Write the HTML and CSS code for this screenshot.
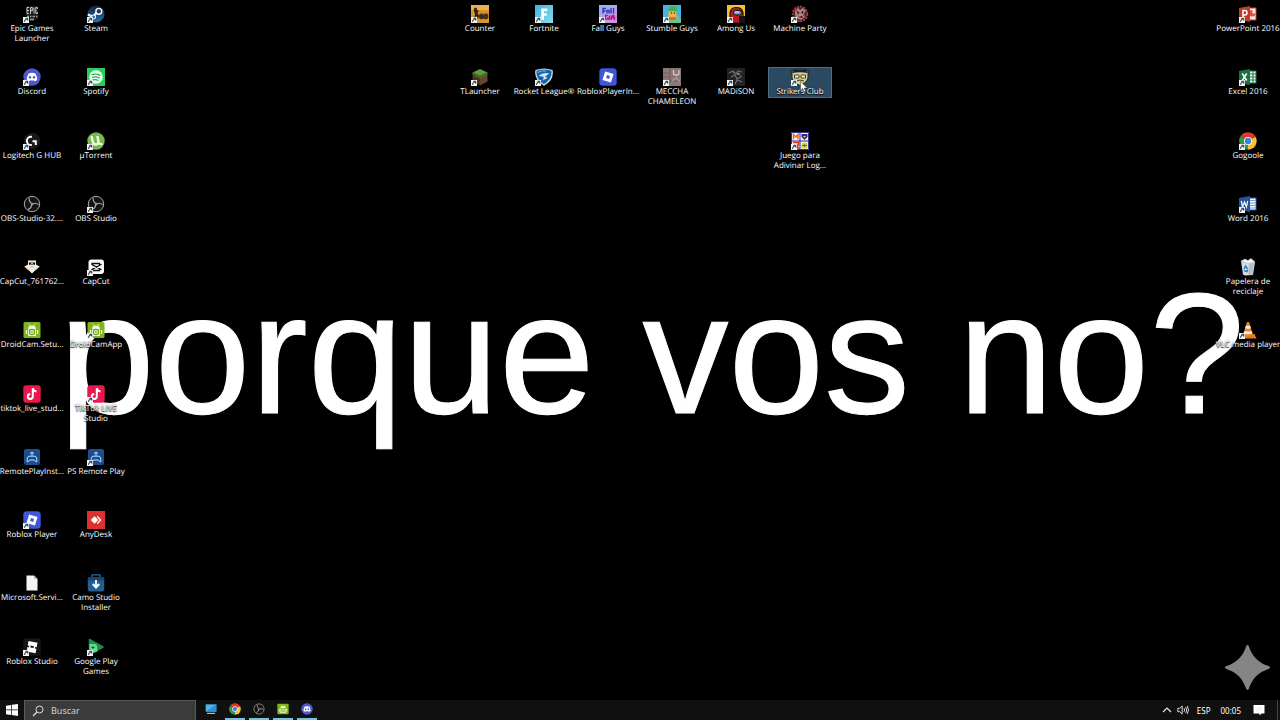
FILE: index.html
```html
<!DOCTYPE html>
<html lang="es">

<head>
  <meta charset="UTF-8">
  <meta name="viewport" content="width=device-width, initial-scale=1.0">
  <title>Escritorio</title>

  <link rel="stylesheet" href="styles.css">
</head>

<body>
  <!-- shared icons -->
  <svg class="sprite" aria-hidden="true">
    <symbol id="shortcut" viewBox="0 0 18 18">
      <rect y="12" width="6" height="6" fill="#f4f4f4" />
      <path d="M1.6 17v-1.2q0-1.3 1.5-1.5M2.6 13.2h2.2v2.2z" fill="#234" stroke="#234" stroke-width=".7" />
    </symbol>
    <symbol id="discord" viewBox="0 0 18 18">
      <circle cx="9" cy="9" r="8.7" fill="#5058d0" />
      <path d="M5.6 5.4Q9 4.3 12.4 5.4Q14.4 8.4 14.2 12Q13 13.1 11.4 13.3L10.8 12.2Q9 12.7 7.2 12.2L6.6 13.3Q5 13.1 3.8 12Q3.6 8.4 5.6 5.4z" fill="#fff" />
      <ellipse cx="7" cy="9.3" rx="1.2" ry="1.4" fill="#5058d0" />
      <ellipse cx="11" cy="9.3" rx="1.2" ry="1.4" fill="#5058d0" />
    </symbol>
    <symbol id="obs" viewBox="0 0 18 18">
      <circle cx="9" cy="9" r="7.7" fill="#141414" stroke="#aaa" stroke-width="1" />
      <g fill="none" stroke="#a8a8a8" stroke-width="1.1">
        <path d="M6.3 2.9Q5.5 7.5 10 8.7" />
        <path d="M6.3 2.9Q5.5 7.5 10 8.7" transform="rotate(120 9 9)" />
        <path d="M6.3 2.9Q5.5 7.5 10 8.7" transform="rotate(240 9 9)" />
      </g>
    </symbol>
    <symbol id="droidcam" viewBox="0 0 18 18">
      <rect x=".5" y="1" width="17" height="16" rx="1.5" fill="#7db51c" />
      <path d="M6 3l1.2 2M12 3l-1.2 2" stroke="#f2f8dc" stroke-width=".8" />
      <path d="M5 8Q5 4.4 9 4.4T13 8z" fill="#f2f8dc" />
      <rect x="5" y="8.6" width="8" height="6.4" rx=".8" fill="#f2f8dc" />
      <path d="M3.5 9v4M14.5 9v4" stroke="#f2f8dc" stroke-width="1.3" />
      <circle cx="9" cy="11" r="2.6" fill="#f2f8dc" stroke="#6fa51a" stroke-width="1.2" />
      <circle cx="9" cy="11" r=".9" fill="#6fa51a" />
    </symbol>
    <symbol id="tiktok" viewBox="0 0 18 18">
      <rect x=".3" y=".3" width="17.4" height="17.4" rx="3" fill="#e91950" />
      <path d="M9.8 3.2V11.4A2.5 2.5 0 1 1 7.2 8.9M9.8 3.2Q10.2 6.2 13.4 6.5" fill="none" stroke="#fff" stroke-width="2" />
    </symbol>
    <symbol id="psremote" viewBox="0 0 18 18">
      <rect x="1" y="1" width="16" height="16" rx="2" fill="#1c4f90" />
      <path d="M6 8.2h6q1.2 0 1.6 2l.4 3.3q-1.4 1-2.6-1.5H6.6Q5.4 14.5 4 13.5l.4-3.3q.4-2 1.6-2zM9 8V4.2M7 5.4q2-2.2 4 0" fill="none" stroke="#bcdcff" stroke-width="1" />
    </symbol>
    <symbol id="roblox" viewBox="0 0 18 18">
      <rect x=".3" y=".3" width="17.4" height="17.4" rx="3.5" fill="#3f55da" />
      <path fill-rule="evenodd" d="M6.2 3.4l8.4 2.7-2.7 8.5-8.5-2.7zM8 7l-.9 3.1 3 .9.9-3z" fill="#fff" />
    </symbol>
    <symbol id="chrome" viewBox="0 0 18 18">
      <path d="M9 9L1.4 4.6A8.7 8.7 0 0 1 16.6 4.8z" fill="#e0392b" />
      <path d="M9 9L16.6 4.8A8.7 8.7 0 0 1 9 17.7z" fill="#f7c52b" />
      <path d="M9 9V17.7A8.7 8.7 0 0 1 1.4 4.6z" fill="#2c9c4b" />
      <circle cx="9" cy="9" r="4.1" fill="#fff" />
      <circle cx="9" cy="9" r="3.2" fill="#3f7fe0" />
    </symbol>
  </svg>

  <main class="desktop">
    <h1 class="wallpaper">porque vos no?</h1>

    <nav class="icons left">
      <a class="item" href="#">
        <svg viewBox="0 0 18 18">
          <path d="M3 1h12v13l-6 2-6-2z" fill="#1c1c1c" />
          <path d="M6 2.5H4v6h2M4 5.5h2M7.5 9V2.5h1.8v3.2H7.5M11 2.5v6M14.4 4V2.5h-1.6v6h1.6V7" fill="none" stroke="#c8c8c8" stroke-width="1" />
          <path d="M4 11.5h2M7 11.5h1.5M9.5 11.5H12M13 11.5h1.5M7 14.5h4" stroke="#999" stroke-width="1.5" />
          <use href="#shortcut" />
        </svg>
        <span>Epic Games<br>Launcher</span>
      </a>
      <a class="item" href="#">
        <svg viewBox="0 0 18 18">
          <linearGradient id="steam" x2="0" y2="1">
            <stop stop-color="#14213d" />
            <stop offset="1" stop-color="#2472a4" />
          </linearGradient>
          <circle cx="9" cy="9" r="8.5" fill="url(#steam)" />
          <path d="M.8 9.5l5.5 2.3L10 7" stroke="#e8eef4" stroke-width="2.4" fill="none" />
          <circle cx="11.8" cy="6.3" r="2.9" fill="#203a5c" stroke="#fff" stroke-width="1.4" />
          <circle cx="6.6" cy="12" r="2" fill="#3c6d98" stroke="#fff" />
          <use href="#shortcut" />
        </svg>
        <span>Steam</span>
      </a>
      <a class="item" href="#">
        <svg viewBox="0 0 18 18"><use href="#discord" /><use href="#shortcut" /></svg>
        <span>Discord</span>
      </a>
      <a class="item" href="#">
        <svg viewBox="0 0 18 18">
          <rect width="18" height="18" fill="#25cf5b" />
          <circle cx="9" cy="9" r="6.8" fill="#f2fff5" />
          <path d="M4.5 6.8q5-1.5 9 .8M5 9.4q4.2-1.2 7.6.7M5.5 11.9q3.3-.9 6 .6" fill="none" stroke="#25b954" stroke-width="1.3" />
          <use href="#shortcut" />
        </svg>
        <span>Spotify</span>
      </a>
      <a class="item" href="#">
        <svg viewBox="0 0 18 18">
          <circle cx="9" cy="9" r="8.3" fill="#1a1a1a" />
          <path d="M9 4.8H8A4.1 4.1 0 0 0 8 13h.8M9.5 9.3h3.3V13" fill="none" stroke="#fff" stroke-width="2" />
          <use href="#shortcut" />
        </svg>
        <span>Logitech G HUB</span>
      </a>
      <a class="item" href="#">
        <svg viewBox="0 0 18 18">
          <circle cx="9" cy="9" r="8.7" fill="#79b84a" />
          <path d="M4.5 4l1.2 5.5q.9 3.6 4 2.9 2.300-.6 1.600-3.900L10.300 4M11.200 9.500q.8 3.300 4.300 2.300" fill="none" stroke="#f4ffe9" stroke-width="2.300" />
          <use href="#shortcut" />
        </svg>
        <span>µTorrent</span>
      </a>
      <a class="item" href="#">
        <svg viewBox="0 0 18 18"><use href="#obs" /></svg>
        <span>OBS-Studio-32....</span>
      </a>
      <a class="item" href="#">
        <svg viewBox="0 0 18 18"><use href="#obs" /><use href="#shortcut" /></svg>
        <span>OBS Studio</span>
      </a>
      <a class="item" href="#">
        <svg viewBox="0 0 18 18">
          <path d="M5 2.500h8v4l3.500 2-4 3.500L9 15.500 5.500 12l-4-3.500L5 6.500z" fill="#f3eee6" />
          <path d="M1.500 8.500l4 3.500M16.500 8.500l-4 3.500" stroke="#d79b78" />
          <path d="M6 4.300h6v2.500H6z" fill="#111" />
          <path d="M7.500 4.500l3 2M10.500 4.500l-3 2" stroke="#fff" stroke-width=".7" />
          <path d="M7 9h4" stroke="#bbb" />
        </svg>
        <span>CapCut_761762...</span>
      </a>
      <a class="item" href="#">
        <svg viewBox="0 0 18 18">
          <rect x="1.500" y="1.500" width="15.500" height="14.500" rx="3" fill="#fafafa" />
          <path d="M14.500 6.300L5 11.500v1h7.500v-1.300M14.500 11.700L5 6.500v-1h7.500v1.300" fill="none" stroke="#111" stroke-width="1.300" />
          <use href="#shortcut" />
        </svg>
        <span>CapCut</span>
      </a>
      <a class="item" href="#">
        <svg viewBox="0 0 18 18"><use href="#droidcam" /></svg>
        <span>DroidCam.Setu...</span>
      </a>
      <a class="item" href="#">
        <svg viewBox="0 0 18 18"><use href="#droidcam" /><use href="#shortcut" /></svg>
        <span>DroidCamApp</span>
      </a>
      <a class="item" href="#">
        <svg viewBox="0 0 18 18"><use href="#tiktok" /></svg>
        <span>tiktok_live_stud...</span>
      </a>
      <a class="item" href="#">
        <svg viewBox="0 0 18 18"><use href="#tiktok" /><use href="#shortcut" /></svg>
        <span>TikTok LIVE<br>Studio</span>
      </a>
      <a class="item" href="#">
        <svg viewBox="0 0 18 18"><use href="#psremote" /></svg>
        <span>RemotePlayInst...</span>
      </a>
      <a class="item" href="#">
        <svg viewBox="0 0 18 18"><use href="#psremote" /><use href="#shortcut" /></svg>
        <span>PS Remote Play</span>
      </a>
      <a class="item" href="#">
        <svg viewBox="0 0 18 18"><use href="#roblox" /><use href="#shortcut" /></svg>
        <span>Roblox Player</span>
      </a>
      <a class="item" href="#">
        <svg viewBox="0 0 18 18">
          <rect width="18" height="18" fill="#df3030" />
          <path d="M7.500 5.200L11.300 9l-3.800 3.800L3.700 9z" fill="#fff" />
          <path d="M10.200 5.500L13.700 9l-3.500 3.500" fill="none" stroke="#fff" stroke-width="1.300" />
        </svg>
        <span>AnyDesk</span>
      </a>
      <a class="item" href="#">
        <svg viewBox="0 0 18 18">
          <path d="M3.500 1.500H11l3.500 3.500v11.500h-11z" fill="#f5f5f5" />
          <path d="M11 1.500V5h3.500z" fill="#bbb" />
        </svg>
        <span>Microsoft.Servi...</span>
      </a>
      <a class="item" href="#">
        <svg viewBox="0 0 18 18">
          <path d="M5 4V.8h8V4" fill="none" stroke="#276a9e" stroke-width="1.300" />
          <rect x=".8" y="3" width="16.400" height="14.500" rx="2" fill="#235f93" />
          <path d="M.8 4.500q0-1.500 2-1.500h12.400q2 0 2 1.500v2H.8z" fill="#17456f" />
          <path d="M9 6v7M5.800 10L9 13.500l3.200-3.500" fill="none" stroke="#fff" stroke-width="1.900" />
        </svg>
        <span>Camo Studio<br>Installer</span>
      </a>
      <a class="item" href="#">
        <svg viewBox="0 0 18 18">
          <rect x=".3" y=".3" width="17.400" height="17.400" rx="3" fill="#161616" />
          <path fill-rule="evenodd" d="M5.500 3l9 1.700-.8 4.500-1.500-.3-.4 1.600 1.600.3-.8 4.400-9-1.700.9-4.500 1.500.3.300-1.600-1.600-.3zM7.700 7.600l-.4 1.800 3.200.6.400-1.800z" fill="#fff" />
          <use href="#shortcut" />
        </svg>
        <span>Roblox Studio</span>
      </a>
      <a class="item" href="#">
        <svg viewBox="0 0 18 18">
          <path d="M2.500 1.500L16 9 2.500 16.500z" fill="#26894d" stroke="#26894d" stroke-width="1.500" stroke-linejoin="round" />
          <path d="M2.500 6h5q2.800 0 2.800 4v3.500L2.500 16z" fill="#5be08e" />
          <path d="M4.500 9.500h3M6 8v3" stroke="#145c32" />
          <use href="#shortcut" />
        </svg>
        <span>Google Play<br>Games</span>
      </a>
    </nav>

    <nav class="icons games">
      <a class="item" href="#">
        <svg viewBox="0 0 18 18">
          <rect width="18" height="18" fill="#dc942f" />
          <rect width="18" height="5" fill="#e9b04e" />
          <path d="M2.500 4.500L8 5.500 6.500 8l1.500 3-1 3-1.500-3-2.500 3 1-5z" fill="#2c2417" />
          <circle cx="4.500" cy="4" r="1.500" fill="#2c2417" />
          <text class="glyph" x="8" y="13" font-size="6" fill="#3b2b14">GO</text>
          <use href="#shortcut" />
        </svg>
        <span>Counter</span>
      </a>
      <a class="item" href="#">
        <svg viewBox="0 0 18 18">
          <linearGradient id="fort" x2="1" y2="1">
            <stop stop-color="#3cb2e4" />
            <stop offset="1" stop-color="#8ddcec" />
          </linearGradient>
          <rect width="18" height="18" fill="url(#fort)" />
          <path d="M6.300 3.500h6v2.700H9v2h2.700v2.500H9v4H6.300z" fill="#fff" />
          <use href="#shortcut" />
        </svg>
        <span>Fortnite</span>
      </a>
      <a class="item" href="#">
        <svg viewBox="0 0 18 18">
          <linearGradient id="fall" x2="1" y2="1">
            <stop stop-color="#8fb9f0" />
            <stop offset="1" stop-color="#d68be8" />
          </linearGradient>
          <rect width="18" height="18" fill="url(#fall)" />
          <path d="M4 8.500V3.500h3M4 6h2.500M8 8.500V5.500h2v3M12 3v5.500M14.500 3v5.500" fill="none" stroke="#2b3bb4" stroke-width="1.400" />
          <path d="M9 10.500H6.500V14H9v-1.500M10.500 10.500V14h2v-3.500M15.500 10.500H14v1.700h1.500V14H14" fill="none" stroke="#c0187e" stroke-width="1.500" />
          <use href="#shortcut" />
        </svg>
        <span>Fall Guys</span>
      </a>
      <a class="item" href="#">
        <svg viewBox="0 0 18 18">
          <rect width="18" height="18" fill="#43b5e0" />
          <path d="M0 18l5-7h9l4 3v4z" fill="#66c48d" />
          <rect x="5.500" y="4" width="8" height="11" rx="3" fill="#f0b64d" />
          <path d="M5 6q0-4.500 5-4.500 4 0 4 3.500l2 1.300H5z" fill="#4fae42" />
          <circle cx="8.500" cy="8" r=".7" fill="#222" />
          <circle cx="11.500" cy="8" r=".7" fill="#222" />
          <path d="M6 12h7v3H6z" fill="#d96938" />
          <use href="#shortcut" />
        </svg>
        <span>Stumble Guys</span>
      </a>
      <a class="item" href="#">
        <svg viewBox="0 0 18 18">
          <rect width="18" height="18" fill="#f0c72b" />
          <path d="M3 18V9q0-6.500 6-6.500t7 5V18z" fill="#c21722" stroke="#19121a" stroke-width="1.200" />
          <path d="M12 11h6v7h-6z" fill="#19121a" />
          <rect x="6.500" y="5.500" width="8" height="4.500" rx="2.200" fill="#7d9aa6" stroke="#19121a" />
          <path d="M8 7h4" stroke="#e2f4f8" />
          <use href="#shortcut" />
        </svg>
        <span>Among Us</span>
      </a>
      <a class="item" href="#">
        <svg viewBox="0 0 18 18">
          <circle cx="9" cy="9" r="7.500" fill="#5b2027" stroke="#8f4a50" stroke-width="1.500" stroke-dasharray="2 1.200" />
          <path d="M4 5l3-2 2 2 3-2 3 3-2 2 1 4-4 3-5-2-1-4z" fill="#a98789" />
          <path d="M5.500 6l3 1.500L7 9.500zM12.500 5.500L10 7.500l2 1.500zM7 12l4-1 1 2z" fill="#320c12" />
          <path d="M3 3l3 3M15 12l-3-2M9 14v3" stroke="#ce1737" stroke-width="1.200" />
          <use href="#shortcut" />
        </svg>
        <span>Machine Party</span>
      </a>
      <a class="item" href="#">
        <svg viewBox="0 0 18 18">
          <path d="M9 1l7.500 3.500L9 8 1.500 4.500z" fill="#5f9c3a" />
          <path d="M1.500 4.500L9 8v9.500l-7.500-4z" fill="#493124" />
          <path d="M16.500 4.500L9 8v9.500l7.500-4z" fill="#69452f" />
          <path d="M1.500 4.500L9 8l7.500-3.500v2L14 7.500v1.200L12 8.500 9 10.500 6 8.800 4 9V7.500l-2.500-1z" fill="#3f7128" />
          <use href="#shortcut" />
        </svg>
        <span>TLauncher</span>
      </a>
      <a class="item" href="#">
        <svg viewBox="0 0 18 18">
          <path d="M1 2.500Q9-.5 17 2.500q1.500 9-8 14.500Q-.5 11 1 2.500z" fill="#1865a6" stroke="#dcecf8" stroke-width="1.200" />
          <path d="M3.500 8q4-4 11-2.500L10 8.500l2.500 1.500L7.500 12.500q2-2.500.5-4z" fill="#cfe6fa" />
          <path d="M2.500 4.500Q7 2 11 3" fill="none" stroke="#70b7ed" />
          <use href="#shortcut" />
        </svg>
        <span>Rocket League®</span>
      </a>
      <a class="item" href="#">
        <svg viewBox="0 0 18 18"><use href="#roblox" /></svg>
        <span>RobloxPlayerIn...</span>
      </a>
      <a class="item" href="#">
        <svg viewBox="0 0 18 18">
          <rect width="18" height="18" fill="#8b7775" />
          <path d="M0 5h7V0M7 5v8h11M0 9h7" fill="none" stroke="#6f5c5c" />
          <path d="M10.500 2v4q3 2.500 5.500 0V2" fill="none" stroke="#d8c9c4" stroke-width="1.200" />
          <path d="M9 13l4-3 4 4" fill="none" stroke="#a99491" stroke-width="1.500" />
          <use href="#shortcut" />
        </svg>
        <span>MECCHA<br>CHAMELEON</span>
      </a>
      <a class="item" href="#">
        <svg viewBox="0 0 18 18">
          <rect width="18" height="18" fill="#202224" />
          <path d="M2 5l4-2 3 3 2-3 4 1M4 9l4-2 2 4 5-3M8 16l2-4 5 2" fill="none" stroke="#6b7073" stroke-width="1.200" />
          <path d="M10 6l2-1 1 2zM6 4l1 2" fill="#a2a7aa" stroke="#888" stroke-width=".6" />
          <use href="#shortcut" />
        </svg>
        <span>MADiSON</span>
      </a>
      <a class="item selected" href="#">
        <svg viewBox="0 0 18 18">
          <path d="M1 2q4 0 8-1.500Q13 2 17 2v8q-1.500 5-8 7.500Q2.500 15 1 10z" fill="#ddd080" stroke="#161c2c" stroke-width="1" />
          <path d="M1.500 2.500Q9 0 16.500 2.500V5Q9 3.500 1.500 5z" fill="#18233a" />
          <path d="M3.500 7h4.500v3H3.500zM10 7h4.500v3H10z" fill="#f1efd9" stroke="#27313a" stroke-width=".9" />
          <path d="M5 13q4-2 8 0" stroke="#34352a" fill="none" />
          <use href="#shortcut" />
        </svg>
        <span>Strikers Club</span>
        <svg class="cursor" viewBox="0 0 8 12" aria-hidden="true">
          <path d="M.5.500v9l2.200-2 1.300 3.500 1.700-.7L4.300 7h3z" fill="#fff" stroke="#111" stroke-width=".4" />
        </svg>
      </a>
      <a class="item last-col" href="#">
        <svg viewBox="0 0 18 18">
          <rect width="18" height="18" fill="#f7f7fa" />
          <path d="M9 0v18M0 9h18" stroke="#26269e" stroke-width="1" />
          <path d="M.5.500h17v17H.500z" fill="none" stroke="#34349c" />
          <path d="M2.500 7.500V2.500L4.800 5 7 2.500v5" stroke="#d8702a" stroke-width="1.500" fill="none" />
          <path d="M10.500 2h6v3l-3 3-3-3z" fill="#3b1f7d" />
          <path d="M12 4h3l-1.500 2z" fill="#f2cf38" />
          <path d="M2 10.500h5.500V13H5l2.500 3H5" fill="none" stroke="#dd3024" stroke-width="1.600" />
          <rect x="10.500" y="10.500" width="6" height="6" rx="1" fill="#e3d733" />
          <path d="M11 13.500h5M13.500 12v3" stroke="#627322" />
          <use href="#shortcut" />
        </svg>
        <span>Juego para<br>Adivinar Log...</span>
      </a>
    </nav>

    <nav class="icons right">
      <a class="item" href="#">
        <svg viewBox="0 0 18 18">
          <rect x="8" y="3" width="9" height="12" fill="#fbeae5" stroke="#c43e2b" />
          <path d="M13.500 5v3.500h3A3.300 3.300 0 1 1 13.500 5z" fill="#d25a45" />
          <path d="M0 3l11-2v16L0 15z" fill="#c13a2a" />
          <path d="M4 13V5.500h2q2 0 2 2.200T6 10H4" fill="none" stroke="#fff" stroke-width="1.500" />
          <use href="#shortcut" />
        </svg>
        <span>PowerPoint 2016</span>
      </a>
      <a class="item" href="#">
        <svg viewBox="0 0 18 18">
          <rect x="8" y="3" width="9" height="12" fill="#effaf2" stroke="#227447" />
          <path d="M11 6h6M11 9h6M11 12h6M14 3v12" stroke="#227447" />
          <path d="M0 3l11-2v16L0 15z" fill="#1d7044" />
          <path d="M3.300 5.500l4.400 7M7.700 5.500l-4.400 7" stroke="#fff" stroke-width="1.500" />
          <use href="#shortcut" />
        </svg>
        <span>Excel 2016</span>
      </a>
      <a class="item" href="#">
        <svg viewBox="0 0 18 18"><use href="#chrome" /><use href="#shortcut" /></svg>
        <span>Gogoole</span>
      </a>
      <a class="item" href="#">
        <svg viewBox="0 0 18 18">
          <rect x="8" y="3" width="9" height="12" fill="#f1f6ff" stroke="#2a5aa0" />
          <path d="M11 5.500h5M11 8h5M11 10.500h5M11 13h5" stroke="#7b9dcb" />
          <path d="M0 3l11-2v16L0 15z" fill="#23539b" />
          <path d="M2.300 6l1.300 6L5.500 7l1.900 5 1.300-6" fill="none" stroke="#fff" stroke-width="1.200" />
          <use href="#shortcut" />
        </svg>
        <span>Word 2016</span>
      </a>
      <a class="item" href="#">
        <svg viewBox="0 0 18 18">
          <path d="M2 3l14 1-2 13-8 .5-2-1z" fill="#d7dde1" />
          <path d="M2 3l4-2 3 1.500L12 .5l4 3.500-7 1.500z" fill="#f6f8f9" stroke="#a8b2b9" stroke-width=".6" />
          <path d="M10 6l5-1-1.500 11.500-4 .8z" fill="#b4bec5" />
          <path d="M5 11l1.500-3L8.500 11M5 12.500l3 1.200 1-2" fill="none" stroke="#2878bd" stroke-width="1.400" />
        </svg>
        <span>Papelera de<br>reciclaje</span>
      </a>
      <a class="item" href="#">
        <svg viewBox="0 0 18 18">
          <path d="M2.500 13h13l2 4.500h-17z" fill="#e37a1b" />
          <path d="M8 1h2l4 13q-5 2-10 0z" fill="#ee8620" />
          <path d="M7 4.500q2 .8 4 0l.8 2.700q-2.800 1-5.600 0zM5.300 10q3.700 1.200 7.400 0l.8 2.500q-4.500 1.500-9 0z" fill="#f4f1ed" />
          <use href="#shortcut" />
        </svg>
        <span>VLC media player</span>
      </a>
    </nav>

    <svg class="sparkle" viewBox="0 0 46 46" aria-hidden="true">
      <path d="M23 0Q24 0 24.500 1.500C28 12 34 18 44.500 21.500Q46 22 46 23Q46 24 44.500 24.500C34 28 28 34 24.500 44.500Q24 46 23 46Q22 46 21.500 44.500C18 34 12 28 1.500 24.500Q0 24 0 23Q0 22 1.500 21.500C12 18 18 12 21.500 1.500Q22 0 23 0z" fill="#858585" />
    </svg>
  </main>

  <footer class="taskbar">
    <button class="start" aria-label="Inicio">
      <svg viewBox="0 0 12 12">
        <path d="M0 1.700l5.200-.8v4.700H0zM5.900.8L12 0v5.600H5.900zM0 6.300h5.200V11L0 10.300zM5.900 6.300H12V12l-6.100-.9z" fill="#fff" />
      </svg>
    </button>
    <label class="search">
      <svg viewBox="0 0 12 12">
        <circle cx="7.500" cy="4.500" r="3.500" fill="none" stroke="#ddd" />
        <path d="M5 7L1 11" stroke="#ddd" stroke-width="1.200" />
      </svg>
      <input type="text" placeholder="Buscar" aria-label="Buscar">
    </label>
    <div class="apps">
      <button aria-label="Este equipo">
        <svg viewBox="0 0 18 18">
          <rect x="1" y="2" width="16" height="11" fill="#4bb5ec" />
          <path d="M1 13L17 2v11z" fill="#2c91d8" />
          <path d="M3 15.500h12" stroke="#b4dcf1" stroke-width="1.600" />
        </svg>
      </button>
      <button class="open" aria-label="Google Chrome"><svg viewBox="0 0 18 18"><use href="#chrome" /></svg></button>
      <button class="open" aria-label="OBS Studio"><svg viewBox="0 0 18 18"><use href="#obs" /></svg></button>
      <button class="open" aria-label="DroidCam"><svg viewBox="0 0 18 18"><use href="#droidcam" /></svg></button>
      <button class="open" aria-label="Discord"><svg viewBox="0 0 18 18"><use href="#discord" /></svg></button>
    </div>
    <div class="tray">
      <button aria-label="Mostrar iconos ocultos">
        <svg viewBox="0 0 12 12"><path d="M2 8l4-4 4 4" fill="none" stroke="#eee" stroke-width="1.100" /></svg>
      </button>
      <button aria-label="Volumen">
        <svg viewBox="0 0 12 12">
          <path d="M.8 4.300h2L5.200 2v8L2.800 7.700h-2zM7 4.200q1.300 1.800 0 3.600M8.700 3q2 3 0 6M10.300 2q2.400 4 0 8" fill="none" stroke="#eee" stroke-width=".9" />
        </svg>
      </button>
      <button class="lang">ESP</button>
      <button class="clock">00:05</button>
      <button class="notify" aria-label="Notificaciones">
        <svg viewBox="0 0 12 12">
          <path d="M.5 1h11v8.500H8.500L6.500 11.500V9.500H.5z" fill="#fff" />
          <path d="M3 3.500h6M3 5.300h6M3 7.100h4" stroke="#ddd" stroke-width=".6" />
        </svg>
      </button>
    </div>
  </footer>
</body>

</html>
```

FILE: styles.css
```css
* {
  margin: 0;
  padding: 0;
  box-sizing: border-box;
}

body {
  display: flex;
  flex-direction: column;
  height: 100vh;
  background: #000;
  color: #fff;
  font-family: "Noto Sans", "Open Sans", sans-serif;
  font-size: 8px;
  text-rendering: geometricPrecision;
  overflow: hidden;
}

button {
  background: none;
  border: 0;
  color: inherit;
  font: inherit;
}

svg {
  display: block;
}

.sprite {
  position: absolute;
  width: 0;
  height: 0;
}

.desktop {
  position: relative;
  flex: 1;
  min-height: 0;
  display: grid;
  grid-template-columns: repeat(20, minmax(0, 1fr));
  padding-top: 4px;
}

/* behind the icons */
.wallpaper {
  position: absolute;
  inset: 0;
  display: flex;
  align-items: center;
  justify-content: center;
  padding: 8px 0 0 24px;
  font-family: "Liberation Sans", Arial, sans-serif;
  font-size: 172px;
  font-weight: 400;
  line-height: 1;
  white-space: nowrap;
  -webkit-text-stroke: 1px #fff;
}

.icons {
  position: relative;
  display: grid;
  grid-template-rows: repeat(11, minmax(0, 1fr));
}

.left {
  grid-column: 1 / 3;
  grid-template-columns: repeat(2, minmax(0, 1fr));
}

.games {
  grid-column: 8 / 14;
  grid-template-columns: repeat(6, minmax(0, 1fr));
}

.right {
  grid-column: 20;
  grid-template-columns: minmax(0, 1fr);
}

.item {
  position: relative;
  display: flex;
  flex-direction: column;
  align-items: center;
  align-self: start;
  gap: 1px;
  border: 1px solid transparent;
  color: #fff;
  font-family: "Open Sans", "Noto Sans", sans-serif;
  line-height: 10px;
  text-align: center;
  text-decoration: none;
  text-shadow: 0 1px 1px #000, 0 0 2px #000;
  white-space: nowrap;
}

.item > svg {
  width: 18px;
  height: 18px;
}

.selected {
  background: #2b4a61;
  border-color: #4d7089;
}

.last-col {
  grid-column: 6;
}

.glyph {
  font-weight: 700;
}

.item > .cursor {
  position: absolute;
  left: 31px;
  top: 13px;
  width: 8px;
  height: 12px;
}

.sparkle {
  position: absolute;
  right: 10px;
  bottom: 10px;
  width: 45px;
  height: 45px;
}

.taskbar {
  display: flex;
  height: 20px;
  background: #101010;
}

.start {
  display: grid;
  place-items: center;
  width: 24px;
}

.start svg,
.search svg,
.tray svg {
  width: 12px;
  height: 12px;
}

.search {
  display: flex;
  align-items: center;
  gap: 7px;
  width: 172px;
  padding-left: 7px;
  background: #3b3b3b;
  border: 1px solid #5a5a5a;
  border-bottom: 0;
}

.search input {
  flex: 1;
  min-width: 0;
  background: none;
  border: 0;
  outline: 0;
  color: #fff;
  font: inherit;
  font-size: 9px;
}

.search input::placeholder {
  color: #d0d0d0;
}

.apps {
  display: flex;
  gap: 4px;
  padding-left: 5px;
}

.apps button {
  display: grid;
  place-items: center;
  width: 20px;
  border-bottom: 2px solid transparent;
}

.apps .open {
  border-color: #76c4dc;
}

.apps svg {
  width: 12px;
  height: 12px;
}

.tray {
  display: flex;
  align-items: center;
  gap: 4px;
  margin-left: auto;
  margin-right: 2px;
  padding-right: 12px;
  border-right: 1px solid #444;
}

.tray .lang {
  padding: 0 4px;
}

.tray .clock {
  padding: 0 8px 0 2px;
}
```
